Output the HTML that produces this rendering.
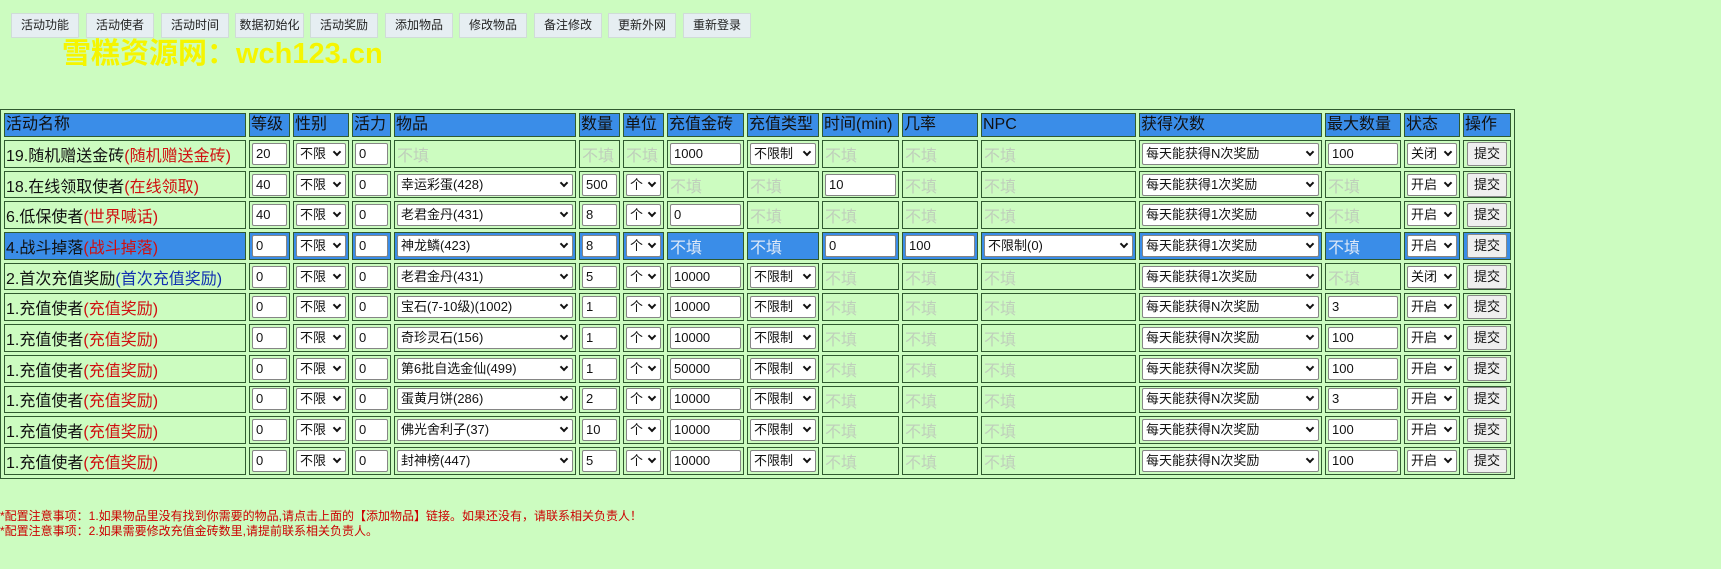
<!DOCTYPE html>
<html><head><meta charset="utf-8">
<style>
html,body{margin:0;padding:0;background:#ccfcc0;width:1721px;height:569px;overflow:hidden;font-family:"Liberation Sans","Noto Sans CJK SC",sans-serif;}
.btn{position:absolute;top:13px;height:25px;width:68px;background:#e6eef2;border:1px solid #d0dcd8;box-sizing:border-box;font-size:12px;line-height:23px;text-align:center;color:#222;}
.wm{position:absolute;left:62px;top:30px;font-size:29px;font-weight:bold;color:#f5f500;letter-spacing:0px;font-family:"Liberation Sans","Noto Sans CJK SC",sans-serif;}
table{position:absolute;left:0;top:109px;border:1px solid #2f5a2f;border-spacing:3px;table-layout:fixed;border-collapse:separate;}
td{border:1px solid #2f5a2f;padding:0 2px;box-sizing:border-box;vertical-align:middle;font-size:16px;white-space:nowrap;overflow:hidden;color:#111;}
tr.h td{background:#3a8de8;height:24px;padding:0 1px;font-size:16px;line-height:20px;color:#111;}
tr.r{height:27.7px;}
tr.r td{height:27.7px;}
tr.hl td{background:#3a8de8;}
.n{padding-left:1px !important;}
.red{color:#d01010}
.blu{color:#1030b0}
.i{display:block;height:22px;box-sizing:border-box;border:1px solid #858585;border-radius:2px;background:#fff;font-size:13px;line-height:20px;padding-left:3px;position:relative;white-space:nowrap;overflow:hidden;color:#111;}
.s{padding-right:12px;}
.s::after{content:"";position:absolute;right:5px;top:5px;width:4px;height:4px;border-right:2px solid #111;border-bottom:2px solid #111;transform:rotate(45deg);}
td.p{color:#bfcfbb;font-size:16px;vertical-align:top;padding-top:1px;}
tr.hl td.p{color:#dde8f8;}
.b{display:block;margin:0 auto;width:40px;height:24px;box-sizing:border-box;border:1px solid #8a8a8a;border-radius:2px;background:#efefef;font-size:13px;line-height:22px;text-align:center;}
.ft{position:absolute;left:0;font-size:12px;color:#cc0000;}
</style></head><body>
<div class="btn" style="left:11px">活动功能</div>
<div class="btn" style="left:86px">活动使者</div>
<div class="btn" style="left:161px">活动时间</div>
<div class="btn" style="left:235px;width:69px">数据初始化</div>
<div class="btn" style="left:310px">活动奖励</div>
<div class="btn" style="left:385px">添加物品</div>
<div class="btn" style="left:459px">修改物品</div>
<div class="btn" style="left:534px">备注修改</div>
<div class="btn" style="left:608px">更新外网</div>
<div class="btn" style="left:683px">重新登录</div>
<div class="wm">雪糕资源网：wch123.cn</div>

<table>
<colgroup>
<col style="width:242px"><col style="width:41px"><col style="width:56px"><col style="width:39px"><col style="width:182px"><col style="width:41px"><col style="width:41px"><col style="width:77px"><col style="width:72px"><col style="width:77px"><col style="width:76px"><col style="width:155px"><col style="width:183px"><col style="width:76px"><col style="width:56px"><col style="width:48px">
</colgroup>
<tr class="h"><td>活动名称</td><td>等级</td><td>性别</td><td>活力</td><td>物品</td><td>数量</td><td>单位</td><td>充值金砖</td><td>充值类型</td><td>时间(min)</td><td>几率</td><td>NPC</td><td>获得次数</td><td>最大数量</td><td>状态</td><td>操作</td></tr>

<tr class="r"><td class="n">19.随机赠送金砖<span class="red">(随机赠送金砖)</span></td><td><span class="i">20</span></td><td><span class="i s">不限</span></td><td><span class="i">0</span></td><td class="p">不填</td><td class="p">不填</td><td class="p">不填</td><td><span class="i">1000</span></td><td><span class="i s">不限制</span></td><td class="p">不填</td><td class="p">不填</td><td class="p">不填</td><td><span class="i s">每天能获得N次奖励</span></td><td><span class="i">100</span></td><td><span class="i s">关闭</span></td><td><span class="b">提交</span></td></tr>

<tr class="r"><td class="n">18.在线领取使者<span class="red">(在线领取)</span></td><td><span class="i">40</span></td><td><span class="i s">不限</span></td><td><span class="i">0</span></td><td><span class="i s">幸运彩蛋(428)</span></td><td><span class="i">500</span></td><td><span class="i s">个</span></td><td class="p">不填</td><td class="p">不填</td><td><span class="i">10</span></td><td class="p">不填</td><td class="p">不填</td><td><span class="i s">每天能获得1次奖励</span></td><td class="p">不填</td><td><span class="i s">开启</span></td><td><span class="b">提交</span></td></tr>

<tr class="r"><td class="n">6.低保使者<span class="red">(世界喊话)</span></td><td><span class="i">40</span></td><td><span class="i s">不限</span></td><td><span class="i">0</span></td><td><span class="i s">老君金丹(431)</span></td><td><span class="i">8</span></td><td><span class="i s">个</span></td><td><span class="i">0</span></td><td class="p">不填</td><td class="p">不填</td><td class="p">不填</td><td class="p">不填</td><td><span class="i s">每天能获得1次奖励</span></td><td class="p">不填</td><td><span class="i s">开启</span></td><td><span class="b">提交</span></td></tr>

<tr class="r hl"><td class="n">4.战斗掉落<span class="red">(战斗掉落)</span></td><td><span class="i">0</span></td><td><span class="i s">不限</span></td><td><span class="i">0</span></td><td><span class="i s">神龙鳞(423)</span></td><td><span class="i">8</span></td><td><span class="i s">个</span></td><td class="p">不填</td><td class="p">不填</td><td><span class="i">0</span></td><td><span class="i">100</span></td><td><span class="i s">不限制(0)</span></td><td><span class="i s">每天能获得1次奖励</span></td><td class="p">不填</td><td><span class="i s">开启</span></td><td><span class="b">提交</span></td></tr>

<tr class="r"><td class="n">2.首次充值奖励<span class="blu">(首次充值奖励)</span></td><td><span class="i">0</span></td><td><span class="i s">不限</span></td><td><span class="i">0</span></td><td><span class="i s">老君金丹(431)</span></td><td><span class="i">5</span></td><td><span class="i s">个</span></td><td><span class="i">10000</span></td><td><span class="i s">不限制</span></td><td class="p">不填</td><td class="p">不填</td><td class="p">不填</td><td><span class="i s">每天能获得1次奖励</span></td><td class="p">不填</td><td><span class="i s">关闭</span></td><td><span class="b">提交</span></td></tr>

<tr class="r"><td class="n">1.充值使者<span class="red">(充值奖励)</span></td><td><span class="i">0</span></td><td><span class="i s">不限</span></td><td><span class="i">0</span></td><td><span class="i s">宝石(7-10级)(1002)</span></td><td><span class="i">1</span></td><td><span class="i s">个</span></td><td><span class="i">10000</span></td><td><span class="i s">不限制</span></td><td class="p">不填</td><td class="p">不填</td><td class="p">不填</td><td><span class="i s">每天能获得N次奖励</span></td><td><span class="i">3</span></td><td><span class="i s">开启</span></td><td><span class="b">提交</span></td></tr>

<tr class="r"><td class="n">1.充值使者<span class="red">(充值奖励)</span></td><td><span class="i">0</span></td><td><span class="i s">不限</span></td><td><span class="i">0</span></td><td><span class="i s">奇珍灵石(156)</span></td><td><span class="i">1</span></td><td><span class="i s">个</span></td><td><span class="i">10000</span></td><td><span class="i s">不限制</span></td><td class="p">不填</td><td class="p">不填</td><td class="p">不填</td><td><span class="i s">每天能获得N次奖励</span></td><td><span class="i">100</span></td><td><span class="i s">开启</span></td><td><span class="b">提交</span></td></tr>

<tr class="r"><td class="n">1.充值使者<span class="red">(充值奖励)</span></td><td><span class="i">0</span></td><td><span class="i s">不限</span></td><td><span class="i">0</span></td><td><span class="i s">第6批自选金仙(499)</span></td><td><span class="i">1</span></td><td><span class="i s">个</span></td><td><span class="i">50000</span></td><td><span class="i s">不限制</span></td><td class="p">不填</td><td class="p">不填</td><td class="p">不填</td><td><span class="i s">每天能获得N次奖励</span></td><td><span class="i">100</span></td><td><span class="i s">开启</span></td><td><span class="b">提交</span></td></tr>

<tr class="r"><td class="n">1.充值使者<span class="red">(充值奖励)</span></td><td><span class="i">0</span></td><td><span class="i s">不限</span></td><td><span class="i">0</span></td><td><span class="i s">蛋黄月饼(286)</span></td><td><span class="i">2</span></td><td><span class="i s">个</span></td><td><span class="i">10000</span></td><td><span class="i s">不限制</span></td><td class="p">不填</td><td class="p">不填</td><td class="p">不填</td><td><span class="i s">每天能获得N次奖励</span></td><td><span class="i">3</span></td><td><span class="i s">开启</span></td><td><span class="b">提交</span></td></tr>

<tr class="r"><td class="n">1.充值使者<span class="red">(充值奖励)</span></td><td><span class="i">0</span></td><td><span class="i s">不限</span></td><td><span class="i">0</span></td><td><span class="i s">佛光舍利子(37)</span></td><td><span class="i">10</span></td><td><span class="i s">个</span></td><td><span class="i">10000</span></td><td><span class="i s">不限制</span></td><td class="p">不填</td><td class="p">不填</td><td class="p">不填</td><td><span class="i s">每天能获得N次奖励</span></td><td><span class="i">100</span></td><td><span class="i s">开启</span></td><td><span class="b">提交</span></td></tr>

<tr class="r"><td class="n">1.充值使者<span class="red">(充值奖励)</span></td><td><span class="i">0</span></td><td><span class="i s">不限</span></td><td><span class="i">0</span></td><td><span class="i s">封神榜(447)</span></td><td><span class="i">5</span></td><td><span class="i s">个</span></td><td><span class="i">10000</span></td><td><span class="i s">不限制</span></td><td class="p">不填</td><td class="p">不填</td><td class="p">不填</td><td><span class="i s">每天能获得N次奖励</span></td><td><span class="i">100</span></td><td><span class="i s">开启</span></td><td><span class="b">提交</span></td></tr>
</table>

<div class="ft" style="top:507px">*配置注意事项：1.如果物品里没有找到你需要的物品,请点击上面的【添加物品】链接。如果还没有，请联系相关负责人！</div>
<div class="ft" style="top:522px">*配置注意事项：2.如果需要修改充值金砖数里,请提前联系相关负责人。</div>
</body></html>
